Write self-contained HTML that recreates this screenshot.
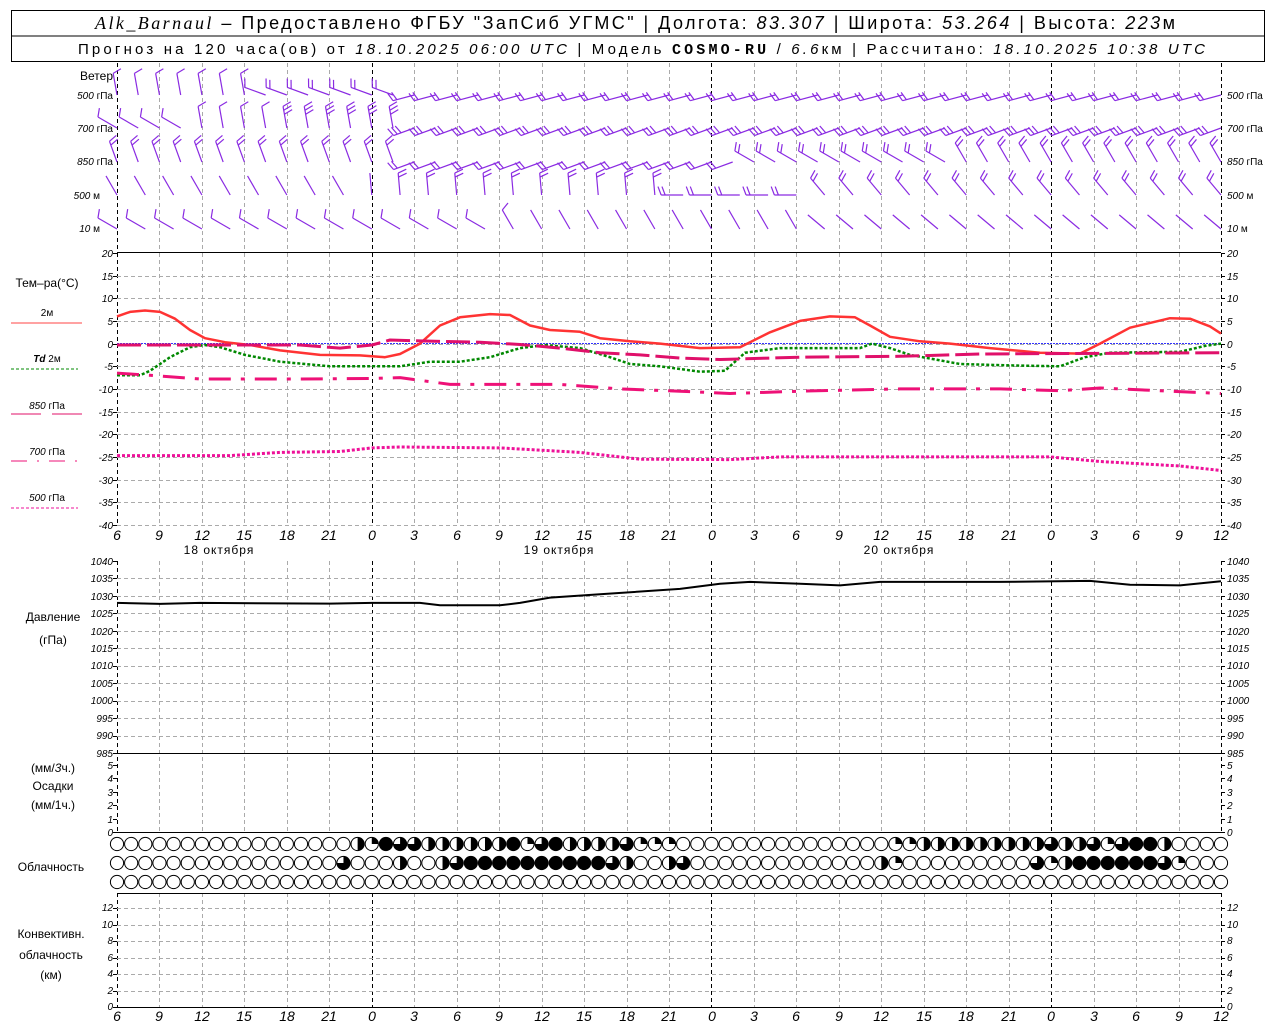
<!DOCTYPE html>
<html><head><meta charset="utf-8"><style>
body{margin:0;background:#fff;width:1280px;height:1024px;overflow:hidden}
svg{display:block}
text{font-family:"Liberation Sans","DejaVu Sans",sans-serif;fill:#000}
.ax{font-size:10px;font-style:italic}
.hr{font-size:14px;font-style:italic}
.lb{font-size:12px}
.sm{font-size:10px}
</style></head><body>
<svg id="s" width="1280" height="1024" xmlns="http://www.w3.org/2000/svg">
<rect x="11.5" y="10.5" width="1253" height="51" fill="none" stroke="#000"/>
<line x1="11" y1="36" x2="1265" y2="36" stroke="#000"/>
<text x="95" y="29" font-size="18" textLength="1080" lengthAdjust="spacing"><tspan font-family="Liberation Serif" font-style="italic">Alk_Barnaul</tspan> – Предоставлено ФГБУ "ЗапСиб УГМС" | Долгота: <tspan font-style="italic">83.307</tspan> | Широта: <tspan font-style="italic">53.264</tspan> | Высота: <tspan font-style="italic">223</tspan>м</text>
<text x="78" y="54" font-size="15" textLength="1127" lengthAdjust="spacing">Прогноз на 120 часа(ов) от <tspan font-style="italic">18.10.2025 06:00 UTC</tspan>  | Модель <tspan font-weight="bold" font-family="Liberation Mono">COSMO-RU</tspan> / <tspan font-style="italic">6.6</tspan>км | Рассчитано: <tspan font-style="italic">18.10.2025 10:38 UTC</tspan></text>

<g text-anchor="end">
<text x="113" y="80" class="lb">Ветер</text>
<text x="113" y="99" class="sm"><tspan font-style="italic">500</tspan> гПа</text>
<text x="113" y="132" class="sm"><tspan font-style="italic">700</tspan> гПа</text>
<text x="113" y="165" class="sm"><tspan font-style="italic">850</tspan> гПа</text>
<text x="100" y="199" class="sm"><tspan font-style="italic">500</tspan> м</text>
<text x="100" y="232" class="sm"><tspan font-style="italic">10</tspan>  м</text>
</g>
<g>
<text x="1227" y="99" class="sm"><tspan font-style="italic">500</tspan> гПа</text>
<text x="1227" y="132" class="sm"><tspan font-style="italic">700</tspan> гПа</text>
<text x="1227" y="165" class="sm"><tspan font-style="italic">850</tspan> гПа</text>
<text x="1227" y="199" class="sm"><tspan font-style="italic">500</tspan> м</text>
<text x="1227" y="232" class="sm"><tspan font-style="italic">10</tspan>  м</text>
</g>

<g class="lb" text-anchor="middle">
<text x="47" y="287">Тем–ра(°С)</text>
<text x="47" y="316" class="sm">2м</text>
<text x="47" y="362" class="sm"><tspan font-style="italic" font-weight="bold">Td</tspan>  2м</text>
<text x="47" y="409" class="sm"><tspan font-style="italic">850</tspan> гПа</text>
<text x="47" y="455" class="sm"><tspan font-style="italic">700</tspan> гПа</text>
<text x="47" y="501" class="sm"><tspan font-style="italic">500</tspan> гПа</text>
<text x="53" y="621">Давление</text>
<text x="53" y="644">(гПа)</text>
<text x="53" y="772">(мм/<tspan font-style="italic">3</tspan>ч.)</text>
<text x="53" y="790">Осадки</text>
<text x="53" y="809">(мм/1ч.)</text>
<text x="51" y="871">Облачность</text>
<text x="51" y="938">Конвективн.</text>
<text x="51" y="959">облачность</text>
<text x="51" y="979">(км)</text>
</g>
<line x1="11" y1="323" x2="82" y2="323" stroke="#f44"/>
<line x1="11" y1="369" x2="78" y2="369" stroke="#080" stroke-dasharray="3,2"/>
<line x1="11" y1="414" x2="41" y2="414" stroke="#e0106a"/><line x1="52" y1="414" x2="82" y2="414" stroke="#e0106a"/>
<line x1="11" y1="461" x2="78" y2="461" stroke="#ee1177" stroke-dasharray="16,10,2,10"/>
<line x1="11" y1="508" x2="78" y2="508" stroke="#ee1199" stroke-dasharray="3,2"/>

<g class="ax" text-anchor="end">
<text x="113" y="257">20</text><text x="113" y="280">15</text><text x="113" y="302">10</text><text x="113" y="325">5</text><text x="113" y="348">0</text><text x="113" y="370">-5</text><text x="113" y="393">-10</text><text x="113" y="416">-15</text><text x="113" y="438">-20</text><text x="113" y="461">-25</text><text x="113" y="484">-30</text><text x="113" y="506">-35</text><text x="113" y="529">-40</text>
<text x="113" y="565">1040</text><text x="113" y="582">1035</text><text x="113" y="600">1030</text><text x="113" y="617">1025</text><text x="113" y="635">1020</text><text x="113" y="652">1015</text><text x="113" y="669">1010</text><text x="113" y="687">1005</text><text x="113" y="704">1000</text><text x="113" y="722">995</text><text x="113" y="739">990</text><text x="113" y="757">985</text>
<text x="113" y="769">5</text><text x="113" y="782">4</text><text x="113" y="796">3</text><text x="113" y="809">2</text><text x="113" y="823">1</text><text x="113" y="836">0</text>
<text x="113" y="911">12</text><text x="113" y="928">10</text><text x="113" y="944">8</text><text x="113" y="961">6</text><text x="113" y="977">4</text><text x="113" y="994">2</text><text x="113" y="1010">0</text>
</g>
<g class="ax">
<text x="1227" y="257">20</text><text x="1227" y="280">15</text><text x="1227" y="302">10</text><text x="1227" y="325">5</text><text x="1227" y="348">0</text><text x="1227" y="370">-5</text><text x="1227" y="393">-10</text><text x="1227" y="416">-15</text><text x="1227" y="438">-20</text><text x="1227" y="461">-25</text><text x="1227" y="484">-30</text><text x="1227" y="506">-35</text><text x="1227" y="529">-40</text>
<text x="1227" y="565">1040</text><text x="1227" y="582">1035</text><text x="1227" y="600">1030</text><text x="1227" y="617">1025</text><text x="1227" y="635">1020</text><text x="1227" y="652">1015</text><text x="1227" y="669">1010</text><text x="1227" y="687">1005</text><text x="1227" y="704">1000</text><text x="1227" y="722">995</text><text x="1227" y="739">990</text><text x="1227" y="757">985</text>
<text x="1227" y="769">5</text><text x="1227" y="782">4</text><text x="1227" y="796">3</text><text x="1227" y="809">2</text><text x="1227" y="823">1</text><text x="1227" y="836">0</text>
<text x="1227" y="911">12</text><text x="1227" y="928">10</text><text x="1227" y="944">8</text><text x="1227" y="961">6</text><text x="1227" y="977">4</text><text x="1227" y="994">2</text><text x="1227" y="1010">0</text>
</g>
<g class="hr" text-anchor="middle">
<text x="117" y="540">6</text><text x="159" y="540">9</text><text x="202" y="540">12</text><text x="244" y="540">15</text><text x="287" y="540">18</text><text x="329" y="540">21</text><text x="372" y="540">0</text><text x="414" y="540">3</text><text x="457" y="540">6</text><text x="499" y="540">9</text><text x="542" y="540">12</text><text x="584" y="540">15</text><text x="627" y="540">18</text><text x="669" y="540">21</text><text x="712" y="540">0</text><text x="754" y="540">3</text><text x="796" y="540">6</text><text x="839" y="540">9</text><text x="881" y="540">12</text><text x="924" y="540">15</text><text x="966" y="540">18</text><text x="1009" y="540">21</text><text x="1051" y="540">0</text><text x="1094" y="540">3</text><text x="1136" y="540">6</text><text x="1179" y="540">9</text><text x="1221" y="540">12</text>
<text x="117" y="1021">6</text><text x="159" y="1021">9</text><text x="202" y="1021">12</text><text x="244" y="1021">15</text><text x="287" y="1021">18</text><text x="329" y="1021">21</text><text x="372" y="1021">0</text><text x="414" y="1021">3</text><text x="457" y="1021">6</text><text x="499" y="1021">9</text><text x="542" y="1021">12</text><text x="584" y="1021">15</text><text x="627" y="1021">18</text><text x="669" y="1021">21</text><text x="712" y="1021">0</text><text x="754" y="1021">3</text><text x="796" y="1021">6</text><text x="839" y="1021">9</text><text x="881" y="1021">12</text><text x="924" y="1021">15</text><text x="966" y="1021">18</text><text x="1009" y="1021">21</text><text x="1051" y="1021">0</text><text x="1094" y="1021">3</text><text x="1136" y="1021">6</text><text x="1179" y="1021">9</text><text x="1221" y="1021">12</text>
</g>
<g class="lb" text-anchor="middle">
<text x="219" y="554" letter-spacing="1">18 октября</text><text x="559" y="554" letter-spacing="1">19 октября</text><text x="899" y="554" letter-spacing="1">20 октября</text>
</g>
<g id="g"></g>
</svg>
<script>
var g=document.getElementById('g'),NS='http://www.w3.org/2000/svg';
function el(t,a){var e=document.createElementNS(NS,t);for(var k in a)e.setAttribute(k,a[k]);g.appendChild(e);return e;}
function L(x1,y1,x2,y2,c,w,d){var a={x1:x1,y1:y1,x2:x2,y2:y2,stroke:c,'stroke-width':w||1};if(d)a['stroke-dasharray']=d;el('line',a);}
var X0=117,X1=1221,S=(X1-X0)/26,H=S/3;
var segs=[[63,252],[253,525],[561,832],[893,1007]];
for(var i=0;i<=26;i++){var x=Math.round(X0+i*S)+.5;var day=(i==0||i==6||i==14||i==22||i==26);
 segs.forEach(function(s){L(x,s[0],x,s[1],day?'#000':'#aaa',1,'4,3');});}
for(var k=1;k<13;k++){var y=Math.round(253+k*272/12)+.5;L(X0,y,X1,y,'#aaa',1,'4,3');}
for(var k=1;k<11;k++){var y=Math.round(561+k*192/11)+.5;L(X0,y,X1,y,'#aaa',1,'4,3');}
for(var k=1;k<7;k++){var y=Math.round(1007-k*16.5)+.5;L(X0,y,X1,y,'#aaa',1,'4,3');}
function ticks(a,b,n){for(var k=0;k<=n;k++){var y=Math.round(a+(b-a)*k/n)+.5;L(X0-4,y,X0,y,'#000');L(X1,y,X1+4,y,'#000');}}
ticks(253,525,12);ticks(561,753,11);ticks(765,832,5);ticks(908,1007,6);
[252.5,753.5,893.5].forEach(function(y){L(X0,y,X1,y,'#000');});
L(X0,832.5,X1,832.5,'#000');L(X0,1007.5,X1,1007.5,'#000');
var ty=function(t){return 343.6-t*4.533};
L(X0,343.5,X1,343.5,'#33f',1,'2,1');
function poly(pts,f,c,w,d){var s=pts.map(function(p){return p[0]+','+f(p[1]).toFixed(1)}).join(' ');var a={points:s,fill:'none',stroke:c,'stroke-width':w,'stroke-linejoin':'round'};if(d)a['stroke-dasharray']=d;el('polyline',a);}
poly([[117,6],[130,7],[145,7.3],[160,7],[175,5.5],[190,3],[205,1.2],[225,0.3],[250,-0.3],[280,-1.5],[320,-2.5],[360,-2.6],[385,-3],[400,-2.3],[420,0],[440,4],[460,5.8],[490,6.5],[510,6.3],[530,4],[550,3],[580,2.6],[600,1.2],[630,0.5],[660,0],[700,-1],[740,-0.8],[770,2.5],[800,5],[830,6],[855,5.8],[870,4],[890,1.5],[920,0.5],[950,0],[990,-1],[1040,-2],[1080,-2.2],[1100,0],[1130,3.5],[1170,5.6],[1190,5.5],[1210,3.8],[1221,2.2]],ty,'#f33',2.5);
poly([[117,-7],[140,-7],[150,-6],[170,-3],[190,-0.8],[205,-0.3],[220,-0.8],[245,-2.5],[280,-4],[330,-5],[372,-5],[400,-5],[430,-4],[460,-4],[490,-3],[520,-1],[545,-0.3],[580,-1],[610,-3],[630,-4.5],[660,-5],[700,-6.2],[725,-6],[745,-2],[780,-1],[860,-1],[872,0],[890,-1],[910,-2.5],[960,-4.5],[1010,-4.8],[1060,-5],[1085,-3],[1110,-2],[1180,-1.8],[1205,-0.5],[1221,0]],ty,'#080',2.5,'3,2');
poly([[117,-0.3],[300,-0.3],[340,-1],[372,-0.3],[390,0.8],[420,0.6],[480,0.3],[520,-0.2],[560,-1],[600,-2],[640,-2.5],[680,-3.2],[720,-3.5],[800,-3],[900,-2.8],[980,-2.3],[1221,-2]],ty,'#e0106a',3,'24,6');
poly([[117,-6.5],[150,-7],[200,-7.8],[300,-7.8],[372,-7.7],[400,-7.5],[450,-9],[560,-9],[620,-10],[680,-10.5],[730,-11],[800,-10.5],[900,-10],[1000,-10],[1060,-10.4],[1100,-9.8],[1221,-11]],ty,'#ee1177',3,'22,10,4,10');
poly([[117,-24.7],[230,-24.7],[280,-24],[340,-23.8],[372,-23],[400,-22.8],[500,-23],[580,-24],[640,-25.5],[730,-25.6],[780,-25],[1050,-25],[1100,-26],[1180,-27],[1221,-28]],ty,'#ee1199',3,'3,2');
poly([[117,1028],[160,1027.7],[200,1028],[330,1027.8],[372,1028],[420,1028],[440,1027.3],[500,1027.3],[520,1028],[550,1029.5],[600,1030.5],[680,1032],[720,1033.5],[750,1034],[800,1033.5],[840,1033],[880,1034],[1000,1034],[1090,1034.3],[1130,1033.2],[1180,1033],[1221,1034.2]],function(p){return 561+(1040-p)*3.49},'#000',2);
var rows=[844,863,882];
var cT={17:2,18:1,19:4,20:3,21:3,22:2,23:2,24:2,25:2,26:2,27:2,28:4,29:1,30:3,31:4,32:2,33:2,34:2,35:2,36:3,37:1,38:1,39:1,
55:1,56:1,57:2,58:2,59:2,60:2,61:2,62:2,63:2,64:2,65:2,66:3,67:2,68:2,69:3,70:1,71:3,72:4,73:4,74:2};
var cM={16:3,20:2,23:2,24:3,25:4,26:4,27:4,28:4,29:4,30:4,31:4,32:4,33:4,34:4,35:3,36:2,39:2,40:3,
54:2,55:1,65:3,66:1,67:2,68:4,69:4,70:4,71:4,72:4,73:4,74:3,75:1};
for(var r=0;r<3;r++)for(var i=0;i<79;i++){var cx=X0+i*H,cy=rows[r],R=6.6;
 el('circle',{cx:cx,cy:cy,r:R,fill:'#fff',stroke:'#000','stroke-width':1});
 var c=r==0?(cT[i]||0):r==1?(cM[i]||0):0;
 if(c==4)el('circle',{cx:cx,cy:cy,r:R,fill:'#000'});
 else if(c==3)el('path',{d:'M'+cx+','+cy+'L'+cx+','+(cy-R)+'A'+R+','+R+' 0 1,1 '+(cx-R)+','+cy+'Z',fill:'#000'});
 else if(c==2)el('path',{d:'M'+cx+','+(cy-R)+'A'+R+','+R+' 0 0,1 '+cx+','+(cy+R)+'Z',fill:'#000'});
 else if(c==1)el('path',{d:'M'+cx+','+cy+'L'+cx+','+(cy-R)+'A'+R+','+R+' 0 0,1 '+(cx+R)+','+cy+'Z',fill:'#000'});
}
var wy=[95,128,162,195,229];
function barb(x,y,ang,n){var a=ang*Math.PI/180,l=22,ex=x+l*Math.cos(a),ey=y-l*Math.sin(a);
 L(x,y,ex,ey,'#8a2be2',1.2);
 for(var k=0;k<n;k++){var bx=x+(l-k*4)*Math.cos(a),by=y-(l-k*4)*Math.sin(a);var b=a-Math.PI/2.6;
 L(bx,by,bx+9*Math.cos(b),by-9*Math.sin(b),'#8a2be2',1.2);}}
for(var r=0;r<5;r++)for(var i=0;i<79;i+=(r<3?1.5:2)){var x=X0+i*H;
 var ang,n;
 if(r==0){ang=i<10?100:(i<20?160:195);n=i<12?1:2;}
 else if(r==1){ang=i<6?150:(i<20?100:200);n=i<12?1:3;}
 else if(r==2){ang=i<20?110:(i<45?200:(i<60?150:120));n=2;}
 else if(r==3){ang=i<18?120:(i<40?95:(i<50?180:130));n=i<20?0:2;}
 else {ang=i<28?150:(i<50?120:140);n=i<30?1:0;}
 barb(x,wy[r],ang,n);}
</script>
</body></html>
